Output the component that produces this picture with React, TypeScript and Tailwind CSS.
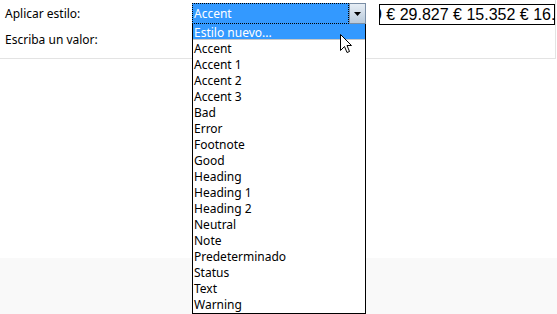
const ITEMS = [
  'Accent',
  'Accent 1',
  'Accent 2',
  'Accent 3',
  'Bad',
  'Error',
  'Footnote',
  'Good',
  'Heading',
  'Heading 1',
  'Heading 2',
  'Neutral',
  'Note',
  'Predeterminado',
  'Status',
  'Text',
  'Warning',
];

export default function App() {
  return (
    <div className="relative w-[557px] h-[314px] overflow-hidden bg-white text-[12px] text-black font-['Noto_Sans',sans-serif]">
      {/* Top panel */}
      <div className="h-[59px] w-[556px] border-r border-b border-[#e3e3e3] flex">
        <div className="w-[192px] pl-[5px] pt-[5px] flex flex-col gap-[9px] leading-[17px]">
          <span>Aplicar estilo:</span>
          <span>Escriba un valor:</span>
        </div>

        {/* Combo */}
        <div className="mt-[3px] w-[174px] h-[21px] flex">
          <div className="flex-1 bg-[#3399ff] border border-dotted border-black text-white leading-[19px] pl-[1px]">
            Accent
          </div>
          <div className="w-[17px] h-[21px] border border-[#7a8ea5] bg-gradient-to-b from-[#e7eef5] to-[#b9cadb] flex items-center justify-center">
            <svg width="7" height="4" viewBox="0 0 7 4">
              <path d="M0 0h7L3.5 4z" fill="#000" />
            </svg>
          </div>
        </div>

        {/* Value box */}
        <div className="ml-[13px] mt-[4px] h-[21px] flex-1 border border-black overflow-hidden whitespace-nowrap font-['Liberation_Sans',sans-serif] text-[16px] leading-[19px]">
          <span className="inline-block -ml-[7px]">9 € 29.827 € 15.352 € 16.009</span>
        </div>
      </div>

      <div className="h-[199px]" />
      <div className="h-[56px] bg-[#f9f9f9]" />

      {/* Dropdown list */}
      <div className="absolute left-[192px] top-[24px] w-[174px] h-[290px] bg-white border border-t-0 border-black leading-[18px]">
        <div className="h-[16px] bg-[#3399ff] text-white pl-[1px] border-b border-[#c8c8c8] leading-[17px]">Estilo nuevo...</div>
        {ITEMS.map((item) => (
          <div key={item} className="h-[16px] pl-[1px]">
            {item}
          </div>
        ))}
      </div>

      {/* Mouse cursor */}
      <svg className="absolute left-[340px] top-[34px]" width="12" height="20" viewBox="0 0 12 20">
        <path
          d="M0.5 0.5V16.5L4.5 12.5L7 18.5L9.5 17.5L7 11.5H11.5Z"
          fill="#fff"
          stroke="#000"
          strokeWidth="1"
          strokeLinejoin="miter"
        />
      </svg>
    </div>
  );
}
